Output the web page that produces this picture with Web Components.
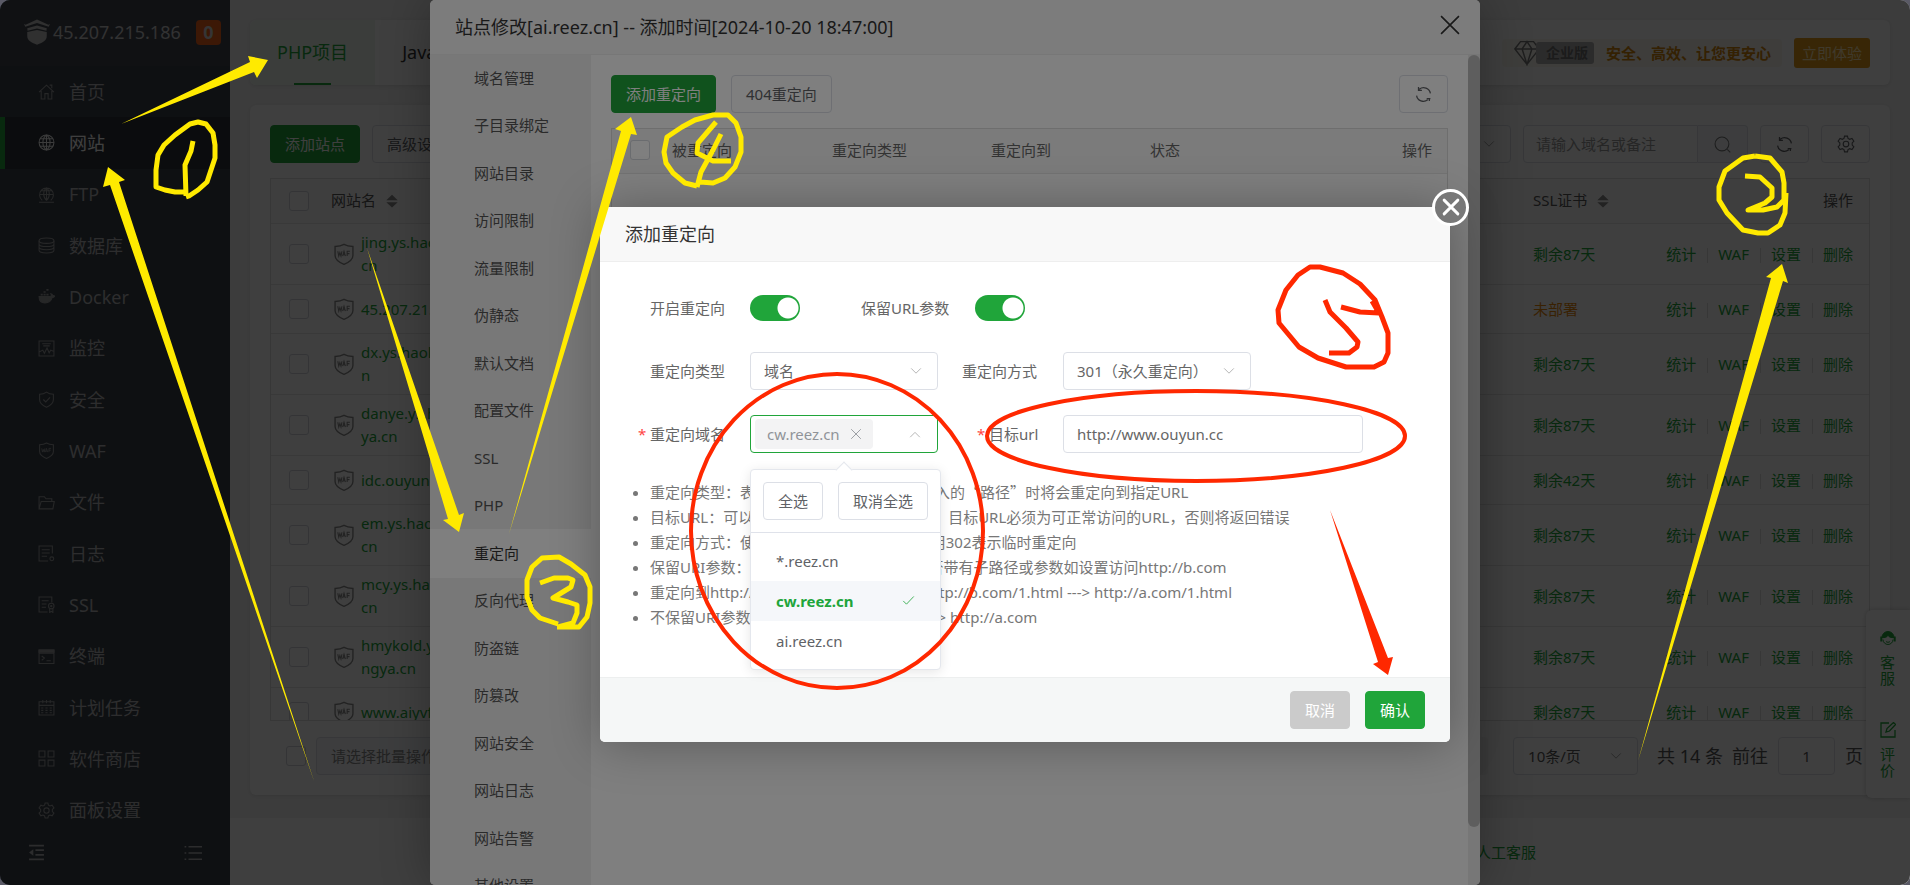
<!DOCTYPE html>
<html lang="zh-CN">
<head>
<meta charset="utf-8">
<title>网站管理</title>
<style>
html,body{height:100%}
body{margin:0;background:#5a5a66;font-family:"Noto Sans","Noto Sans CJK SC",sans-serif;font-size:15px;line-height:24px;color:#666;overflow:hidden}
</style>
</head>
<body>
<app-shell></app-shell>
<script>
const ICONS={
home:'<path d="M1 8.5 8 2l7 6.500M3 7.500V15h3.500v-5h3v5H13V7.500M11 2h2v3"/>',
globe:'<circle cx="8" cy="8" r="7"/><path d="M1 8h14M8 1v14M2 4.500h12M2 11.500h12M8 1C3.500 4 3.500 12 8 15M8 1c4.500 3 4.500 11 0 14"/>',
ftp:'<path d="M4 13.500a6.500 6.500 0 1 1 8 0M1.500 8h13M8 1.500v12M8 1.500c-3.500 3-3.500 9 0 12M8 1.500c3.500 3 3.500 9 0 12M3 4.500h10M1 15.300h14"/>',
db:'<ellipse cx="8" cy="3.500" rx="7" ry="2.500"/><path d="M1 3.500v9c0 1.400 3.100 2.500 7 2.500s7-1.100 7-2.500v-9M1 6.500C1 7.900 4.100 9 8 9s7-1.100 7-2.500M1 9.500C1 10.900 4.100 12 8 12s7-1.100 7-2.500"/>',
docker:'<path d="M1 8h10.500c1 0 1.300-1.600.6-2.600 1.200.1 1.700 1 1.700 1.800.8-.2 1.600 0 2 .5-.6 1-1.500 1.300-2.500 1.300C12.300 12.500 9.500 14 6.500 14 3 14 1 12 1 8z" fill="currentColor"/><path d="M2.500 5.500h2v1.500h-2zM5.200 5.500h2v1.500h-2zM7.900 5.500h2v1.500h-2zM5.200 3h2v1.500h-2zM7.900 1h2v1.500h-2z" fill="currentColor" stroke="none"/>',
monitor:'<path d="M1 1h14v14H1zM4 3.500h8M5 5.500h6M1.500 11l3-1.500 1.500 3 2.500-5 2 4.500 1.500-2.500 2.500 1"/>',
shield:'<path d="M8 1c2 1.500 4 2 6.500 2v5c0 3.500-3 5.700-6.500 7.300C4.500 13.700 1.500 11.500 1.500 8V3C4 3 6 2.500 8 1z"/><path d="m5 8 2.300 2.300L11.300 6"/>',
waf:'<path d="M8 1c2 1.200 4 1.500 6.500 1.500V9c0 3-3 5-6.500 6.500C4.500 14 1.500 12 1.500 9V2.500C4 2.500 6 2.200 8 1z"/><path d="m3.500 6 .7 3.500L5 7l.8 2.500L6.500 6M7 9.500 8 6l1 3.500M7.300 8.500h1.400M10.300 9.500V6h2M10.300 7.700h1.700" stroke-width=".8"/>',
folder:'<path d="M1 14V2.500h5L7.500 4.500H13V7M1 14 3 7h12.300L14 14z"/>',
log:'<path d="M13.500 8V1H1v14h8.500M3.500 4.500H11M3.500 7.500H11M3.500 10.500h5"/><circle cx="13" cy="13" r="1.800"/>',
ssl:'<path d="M13 6V1H1v14h8M3.500 4.500H10M3.500 7.500H8M3.500 10.500h4"/><circle cx="12.500" cy="9.500" r="2.600"/><circle cx="12.500" cy="9.500" r=".6"/><path d="M11 12v3.500l1.500-1 1.500 1V12"/>',
term:'<path d="M1 2h14v12.500H1zM1 5h14M3.500 7.500 6 9.500l-2.500 2M8 12h4"/><path d="M1 2h14v2H1z" fill="currentColor"/>',
cal:'<path d="M1 2.500h14V15H1zM1 6h14M4.500 1v3M8 1v3M11.500 1v3M3 8.500h2M7 8.500h2M11 8.500h2M3 10.700h2M7 10.700h2M11 10.700h2M3 13h2M7 13h2M11 13h2"/>',
grid:'<path d="M1 1h5.500v5.500H1zM9.500 1H15v5.500H9.500zM1 9.500h5.500V15H1zM9.500 9.500H15V15H9.500z"/>',
gear:'<path d="m6.700 1-.5 2-1.500.8-2-.8L1 5.500 2.500 7v2L1 10.500 2.700 13l2-.8 1.500.8.5 2h2.600l.5-2 1.500-.8 2 .8L15 10.500 13.500 9V7L15 5.500 13.300 3l-2 .8L9.800 3l-.5-2z"/><circle cx="8" cy="8" r="2.500"/>',
fold:'<path d="M1 1.500h14M7 5.800h8M7 10.200h8M1 14.500h14" stroke-width="1.500"/><path d="M5 5v6L1 8z" fill="currentColor" stroke="none"/>',
list:'<path d="M4 2.500h12M4 8h12M4 13.500h12M.5 2.500H2M.5 8H2M.5 13.500H2" stroke-width="1.300"/>',
refresh:'<path d="M1.500 9A6.500 6.500 0 0 0 12 13M14.500 7A6.500 6.500 0 0 0 4 3M3.300 1v3.200h3.200M14.500 11.800H11M13.500 11.800V14" stroke-width="1.200"/>',
search:'<circle cx="7.500" cy="7.500" r="6.500"/><path d="m12.500 12.500 2.800 2.800"/>',
down:'<path d="m2.500 5 5.500 5.500L13.500 5"/>',
up:'<path d="m2.500 10.500 5.500-5.500 5.500 5.500"/>',
x:'<path d="m2.500 2.500 11 11M13.500 2.500l-11 11"/>',
xbold:'<path d="m2.500 2.500 11 11M13.500 2.500l-11 11" stroke-width="2.300" stroke-linecap="round"/>',
check:'<path d="m1.500 8.500 4 4 9-9.500"/>',
sort:'<path d="M8 .8 14.500 7h-13zM1.500 9.500h13L8 15.500z" fill="currentColor" stroke="none"/>',
diamond:'<path d="M4 1h8l3.500 4.500L8 15 .5 5.500zM.5 5.500h15M5 5.500 8 15l3-9.500M5 5.500 8 1l3 4.500" stroke-width=".9"/>',
head:'<path d="M2 7.500a6 6 0 0 1 12 0c-3 .5-5-.5-6-2-1 1.500-3 2.500-6 2z" fill="currentColor"/><path d="M3 9.500a5 5 0 0 0 10 0M6 11.500c1 1 3 1 4 0"/><path d="M.3 6.500h2v5h-2zM13.700 6.500h2v5h-2z" fill="currentColor" stroke="none"/>',
edit:'<path d="M9 1H1v14h14V8M6 10l1-3.500L13.500.5l2 2L9.500 9z" stroke-width="1.300"/>',
logo:'<path d="M8 .3 1 3.500 0 3l.8 1.700L8 2.500l7.200 2.200L16 3l-1 .5zM2 5.700 8 4l6 1.700-.2 1.500L8 5.800 2.200 7.200z" fill="currentColor" stroke="none"/><path d="M2 8 8 6.700 14 8v2.500c0 2.500-2 4-6 5.300-4-1.300-6-2.800-6-5.300z" fill="currentColor" stroke="none"/>'
};
const define=(name,css,html)=>customElements.define(name,class extends HTMLElement{
  constructor(){super();this.attachShadow({mode:'open'}).innerHTML='<style>*{box-sizing:border-box}'+css+'</style>'+html}
});

customElements.define('ui-icon',class extends HTMLElement{
  connectedCallback(){
    const s=this.getAttribute('size')||16;
    if(!this.shadowRoot)this.attachShadow({mode:'open'}).innerHTML=`<style>:host{display:inline-flex;flex:none}svg{display:block}</style><svg width="${s}" height="${s}" viewBox="0 0 16 16" fill="none" stroke="currentColor" stroke-width="1" aria-hidden="true">${ICONS[this.getAttribute('name')]}</svg>`;
  }
});

define('ui-button',`
:host{display:inline-flex;flex:none}
button{font:inherit;height:38px;padding:0 14px;border:1px solid #dcdfe6;border-radius:4px;background:#fff;color:#606266;display:flex;align-items:center;justify-content:center;white-space:nowrap;cursor:pointer}
:host([kind=primary]) button{background:#20a53a;border-color:#20a53a;color:#fff}
:host([kind=muted]) button{background:#cbcbcb;border-color:#cbcbcb;color:#fff}
:host([kind=icon]) button{width:49px;padding:0}
`,`<button type="button"><slot></slot></button>`);

define('app-sidebar',`
:host{display:flex;flex-direction:column;flex:none;width:230px;background:#3a4149;color:#c8c8c8}
header{height:66px;display:flex;align-items:center;padding:0 9px 2px 24px;font-size:18px;background:#40474f}
header ui-icon{color:#c0c0c0;margin-right:3px}
header span{flex:1}
b{width:25px;height:25px;border-radius:4px;background:#f0601a;color:#d4d4d4;text-align:center;line-height:25px}
nav{flex:1;display:grid;grid-auto-rows:1fr}
a{display:flex;align-items:center;padding-left:38px;gap:14px;font-size:18px;color:#b4b6b8;text-decoration:none}
a ui-icon{color:#9a9c9e}
a.on{background:#2c3138;border-left:5px solid #20a53a;padding-left:33px;color:#fff}
a.on ui-icon{color:#f0f0f0}
footer{height:49px;padding:8px 28px;display:flex;justify-content:space-between;align-items:flex-start;color:#b0b2b4}
`,`<header><ui-icon name="logo" size="26"></ui-icon><span>45.207.215.186</span><b>0</b></header><nav>`+
[['home','首页'],['globe','网站'],['ftp','FTP'],['db','数据库'],['docker','Docker'],['monitor','监控'],['shield','安全'],['waf','WAF'],['folder','文件'],['log','日志'],['ssl','SSL'],['term','终端'],['cal','计划任务'],['grid','软件商店'],['gear','面板设置']]
.map(([i,t],n)=>`<a href="#${i}"${n==1?' class="on"':''}><ui-icon name="${i}" size="17"></ui-icon>${t}</a>`).join('')+
`</nav><footer><ui-icon name="fold" size="17"></ui-icon><ui-icon name="list" size="18"></ui-icon></footer>`);

define('top-tabs',`
:host{display:flex;height:65px;background:#fdfdfd;border-radius:6px;overflow:hidden;flex:none;box-shadow:0 1px 4px rgba(0,0,0,.1)}
a{position:relative;display:flex;align-items:center;padding:0 27px 2px;font-size:18px;color:#333;text-decoration:none}
a.on{background:#edf6ee;color:#20a53a}
a.on::after{content:"";position:absolute;left:44px;right:44px;bottom:0;height:2px;background:#20a53a}
.promo{margin-left:auto;margin-right:20px;display:flex;align-items:center;gap:12px}
.pill{display:flex;align-items:center;height:28px;padding:0 11px 0 12px;border-radius:4px;background:#f9f6ef;color:#d3850a;font-weight:700}
.pill ui-icon{color:#777}
.tag{background:#acacac;color:#6c6c6c;border-radius:3px;padding:0 6px 0 10px;line-height:22px;font-size:14px;margin:0 12px 0 -4px}
button{font:inherit;height:30px;border:0;border-radius:3px;background:#e09a18;color:#ffe6b0;padding:0 8px;white-space:nowrap}
`,`<a class="on" href="#php">PHP项目</a><a href="#java">Java项目</a>
<div class="promo"><div class="pill"><ui-icon name="diamond" size="26"></ui-icon><span class="tag">企业版</span>安全、高效、让您更安心</div><button type="button">立即体验</button></div>`);

const SITES=[['jing.ys.haolengya.','cn','87'],['45.207.215.186','',''],['dx.ys.haolengya.c','n','87'],['danye.ys.haoleng','ya.cn','87'],['idc.ouyun.cc','','42'],['em.ys.haolengya.','cn','87'],['mcy.ys.haolengya.','cn','87'],['hmykold.ys.haole','ngya.cn','87'],['www.aiyvf.cn','','87']];
define('site-table',`
:host{display:block;flex:1;min-height:0;overflow:hidden;border:1px solid #dcdcdc;background:#fff}
table{width:100%;table-layout:fixed;border-collapse:separate;border-spacing:0}
th{height:45px;padding:0 12px 2px;background:#fafafa;border-bottom:1px solid #e6e6e6;font-weight:400;text-align:left;color:#555}
td{height:49px;padding:0 12px;border-bottom:1px solid #e6e6e6;line-height:23px;color:#20a53a}
tr.two td{height:61px}
th:first-child,td:first-child{padding:0 0 0 18px}
th:last-child,td:last-child{text-align:right;padding-right:16px}
input{appearance:none;display:block;width:20px;height:20px;margin:0;border:1px solid #d0d3da;border-radius:3px;background:#fff}
.site{display:flex;align-items:center;gap:6px;margin-left:2px;white-space:nowrap}
.site ui-icon{color:#8a8a8a}
a{color:inherit;text-decoration:none}
i{display:inline-block;width:1px;height:15px;background:#dcdcdc;margin:0 10px 0 11px;vertical-align:-3px}
.none{color:#e6860a}
th ui-icon{color:#888;margin-left:9px;vertical-align:-2px}
`,`<table><colgroup><col style="width:48px"><col style="width:200px"><col><col style="width:128px"><col style="width:220px"></colgroup>
<thead><tr><th><input type="checkbox" aria-label="全选"></th><th>网站名<ui-icon name="sort" size="14"></ui-icon></th><th></th><th>SSL证书<ui-icon name="sort" size="14"></ui-icon></th><th>操作</th></tr></thead><tbody>`+
SITES.map(([a,b,d])=>`<tr class="${b?'two':''}"><td><input type="checkbox" aria-label="选择站点"></td><td><div class="site"><ui-icon name="waf" size="22"></ui-icon><a href="#site">${a}${b?'<br>'+b:''}</a></div></td><td></td><td>${d?`<a href="#ssl">剩余${d}天</a>`:'<a class="none" href="#ssl">未部署</a>'}</td><td><a href="#s">统计</a><i></i><a href="#w">WAF</a><i></i><a href="#c">设置</a><i></i><a href="#d">删除</a></td></tr>`).join('')+`</tbody></table>`);

define('site-card',`
:host{display:flex;flex-direction:column;flex:1;min-height:0;background:#fdfdfd;border-radius:6px;padding:20px;box-shadow:0 1px 4px rgba(0,0,0,.1)}
.bar{display:flex;gap:12px;margin-bottom:15px;flex:none}
.bar .gap{flex:1}
input[type=text],select{font:inherit;height:38px;border:1px solid #dcdfe6;border-radius:4px;background:#fff;padding:0 14px;color:#555;appearance:none;min-width:0}
input::placeholder{color:#999;opacity:1}
.sel{position:relative;display:flex}
.sel select{width:125px}
.sel ui-icon{position:absolute;right:15px;top:12px;color:#999}
.find{display:flex}
.find input{width:175px;padding:0 12px;border-radius:4px 0 0 4px}
.find button{width:50px;border:1px solid #dcdfe6;border-left:0;border-radius:0 4px 4px 0;background:#f5f7fa;color:#777;padding:4px 0 0}
.pager{display:flex;align-items:center;margin-top:16px;flex:none;font-size:18px;color:#555}
.pager input[type=checkbox]{appearance:none;width:20px;height:20px;margin:0 10px 0 16px;border:1px solid #d0d3da;border-radius:3px}
.pager select,.pager input[type=text]{font-size:15px}
.pager .batch{width:200px;background:#f5f7fa;color:#888}
.pager .do{margin-left:auto;margin-right:25px;width:70px;height:38px;border:0;border-radius:4px;background:#f2f2f2;font:inherit;font-size:15px;color:#ccc}
.total{margin:0 9px 0 19px}
.pager .go{width:57px;text-align:center;margin:0 10px}
.end{margin-right:7px}
`,`<div class="bar"><ui-button kind="primary">添加站点</ui-button><ui-button>高级设置</ui-button><span class="gap"></span>
<span class="sel"><select aria-label="分类"><option>全部分类</option></select><ui-icon name="down" size="14"></ui-icon></span>
<span class="find"><input type="text" placeholder="请输入域名或备注" aria-label="搜索"><button type="button" aria-label="搜索"><ui-icon name="search" size="17"></ui-icon></button></span>
<ui-button kind="icon"><ui-icon name="refresh" size="17"></ui-icon></ui-button><ui-button kind="icon"><ui-icon name="gear" size="18"></ui-icon></ui-button></div>
<site-table></site-table>
<div class="pager"><input type="checkbox" aria-label="全选"><select class="batch" aria-label="批量操作"><option>请选择批量操作</option></select><button class="do" type="button">执行</button>
<span class="sel"><select aria-label="每页"><option>10条/页</option></select><ui-icon name="down" size="14"></ui-icon></span><span class="total">共 14 条</span><label for="go">前往</label><input class="go" id="go" type="text" value="1"><span class="end">页</span></div>`);

define('side-float',`
:host{position:absolute;right:0;top:610px;width:44px;height:188px;background:#fff;border-radius:6px 0 0 6px;box-shadow:0 0 5px rgba(0,0,0,.2);display:flex;flex-direction:column;align-items:center;justify-content:space-between;padding:20px 0;color:#20a53a}
a{width:16px;color:inherit;text-decoration:none;line-height:16px;display:flex;flex-direction:column;gap:8px}
`,`<a href="#kf"><ui-icon name="head" size="16"></ui-icon>客服</a><a href="#pj"><ui-icon name="edit" size="16"></ui-icon>评价</a>`);

define('site-page',`
:host{flex:1;min-width:0;display:flex;flex-direction:column;background:#f2f2f2}
main{flex:1;min-height:0;display:flex;flex-direction:column;gap:20px;padding:20px 20px 23px}
footer{height:67px;flex:none;background:#fcfcfc;display:flex;justify-content:center;align-items:center;padding-left:872px}
footer a{color:#20a53a;text-decoration:none}
`,`<main><top-tabs></top-tabs><site-card></site-card></main><footer><a href="#help">人工客服</a></footer><side-float></side-float>`);

define('site-drawer',`
:host{display:flex;flex-direction:column;width:1050px;max-width:100%;height:100%;background:#fff;border-radius:5px;overflow:hidden;box-shadow:1px 1px 50px rgba(0,0,0,.3)}
header{height:55px;flex:none;display:flex;align-items:center;justify-content:space-between;padding:0 17px 0 25px;background:#f8f8f8;border-bottom:1px solid #eee;font-size:18px;color:#333}
header button{border:0;background:none;padding:0;color:#333;display:flex;margin-top:-5px}
.body{flex:1;min-height:0;display:flex}
nav{width:161px;flex:none;background:#f0f0f0;display:grid;grid-auto-rows:47px 48px;align-content:start;overflow:hidden}
nav a{padding:0 0 2px 44px;display:flex;align-items:center;color:#555;text-decoration:none}
nav a.on{background:#fff;margin:-1px 0;color:#333}
section{flex:1;padding:20px}
.bar{display:flex;gap:15px;margin-bottom:15px}
.bar ui-button:last-child{margin-left:auto}
table{width:100%;height:320px;border:1px solid #ddd;border-collapse:separate;border-spacing:0;table-layout:fixed}
th{height:45px;background:#f6f6f6;border-bottom:1px solid #e6e6e6;padding:0 0 2px;text-align:left;font-weight:400;color:#666}
th:first-child{padding-left:18px}
th:last-child{text-align:right;padding-right:15px}
input{appearance:none;display:block;width:20px;height:20px;margin:0;border:1px solid #d5d8df;border-radius:3px;background:#fff}
.track{width:12px;background:#eee}
.thumb{height:93%;background:#bdbdbd;border-radius:6px}
`,`<header><span>站点修改[ai.reez.cn] -- 添加时间[2024-10-20 18:47:00]</span><button type="button" aria-label="关闭"><ui-icon name="x" size="26"></ui-icon></button></header>
<div class="body"><nav>`+'域名管理,子目录绑定,网站目录,访问限制,流量限制,伪静态,默认文档,配置文件,SSL,PHP,重定向,反向代理,防盗链,防篡改,网站安全,网站日志,网站告警,其他设置'.split(',').map(t=>`<a href="#m"${t=='重定向'?' class="on"':''}>${t}</a>`).join('')+`</nav>
<section><div class="bar"><ui-button kind="primary">添加重定向</ui-button><ui-button>404重定向</ui-button><ui-button kind="icon"><ui-icon name="refresh" size="17"></ui-icon></ui-button></div>
<table><colgroup><col style="width:60px"><col style="width:160px"><col style="width:159px"><col style="width:159px"><col></colgroup><thead><tr><th><input type="checkbox" aria-label="全选"></th><th>被重定向</th><th>重定向类型</th><th>重定向到</th><th>状态</th><th>操作</th></tr></thead><tbody><tr><td colspan="6"></td></tr></tbody></table></section>
<div class="track"><div class="thumb"></div></div></div>`);

define('redirect-dialog',`
:host{display:flex;flex-direction:column;position:relative;width:850px;color:#666;background:#fff;border-radius:5px;box-shadow:1px 1px 50px rgba(0,0,0,.3)}
header{height:55px;padding:0 25px;display:flex;align-items:center;background:#f8f8f8;border-bottom:1px solid #eee;border-radius:5px 5px 0 0;font-size:18px;color:#333}
.close{position:absolute;right:-19px;top:-18px;width:37px;height:37px;border:3px solid #fff;border-radius:50%;background:#787878;color:#fff;padding:0;display:grid;place-items:center}
form{padding:33px 50px 47px}
.row{display:flex;align-items:center;height:38px;margin-bottom:25px}
.row.first{height:26px;margin-bottom:31px}
.row.last{margin-bottom:26px}
.row>label{width:100px;position:relative}
.req::before{content:"*";position:absolute;left:-12px;color:#f44}
.row>label.b{width:101px;margin-left:24px}
.row.first>label.b{width:114px;margin-left:61px}
.r{display:block;padding-left:27px}
.r::before{content:"*";position:absolute;left:15px;color:#f44}
.sw{appearance:none;width:50px;height:26px;margin:0;border-radius:13px;background:radial-gradient(circle at 38px 13px,#fff 10px,#20a53a 11px)}
.sel{position:relative;display:flex;width:188px}
select,input[type=url]{font:inherit;width:100%;height:38px;border:1px solid #dcdfe6;border-radius:4px;background:#fff;padding:0 13px;color:#666;appearance:none}
.url{width:300px}
.sel>ui-icon{position:absolute;right:15px;top:12px;color:#aaa}
.multi{height:38px;border:1px solid #20a53a;border-radius:4px;align-items:center;padding-left:4px}
.tag{height:30px;display:flex;align-items:center;gap:9px;padding:0 10px 0 12px;border-radius:4px;background:#f3f3f4;color:#909399}
.tag button{border:0;background:none;padding:0;display:flex;color:#909399}
.pop{position:absolute;left:-1px;top:53px;width:191px;height:201px;background:#fff;border:1px solid #e4e7ed;border-radius:4px;box-shadow:0 2px 12px rgba(0,0,0,.1)}
.pop::before{content:"";position:absolute;left:87px;top:-6px;width:11px;height:11px;background:#fff;border:1px solid #e4e7ed;border-right:0;border-bottom:0;transform:rotate(45deg)}
.act{display:flex;gap:15px;padding:12px;border-bottom:1px solid #dfe2ea}
.pop ul{list-style:none;margin:0;padding:8px 0}
.pop li{height:40px;display:flex;align-items:center;justify-content:space-between;padding:0 25px;color:#606266}
.pop li.on{background:#f5f7fa;color:#20a53a;font-weight:700}
.help{margin:0;padding:0;line-height:25px;color:#777;white-space:nowrap}
.help q{quotes:none;font-family:"Noto Sans CJK SC",sans-serif}
footer{height:65px;display:flex;align-items:center;justify-content:flex-end;gap:15px;padding:0 25px;background:#f5f7f7;border-top:1px solid #edefef;border-radius:0 0 5px 5px}
`,`<header>添加重定向</header><button class="close" type="button" aria-label="关闭"><ui-icon name="xbold" size="20"></ui-icon></button>
<form><div class="row first"><label for="on">开启重定向</label><input class="sw" id="on" type="checkbox" checked><label class="b" for="keep">保留URL参数</label><input class="sw" id="keep" type="checkbox" checked></div>
<div class="row"><label for="type">重定向类型</label><span class="sel"><select id="type"><option>域名</option></select><ui-icon name="down" size="14"></ui-icon></span><label class="b" for="mode">重定向方式</label><span class="sel"><select id="mode"><option>301（永久重定向）</option></select><ui-icon name="down" size="14"></ui-icon></span></div>
<div class="row last"><label class="req" id="dl">重定向域名</label><div class="sel multi" role="combobox" aria-labelledby="dl" aria-expanded="true"><span class="tag">cw.reez.cn<button type="button" aria-label="移除"><ui-icon name="x" size="14"></ui-icon></button></span><ui-icon name="up" size="14"></ui-icon>
<div class="pop"><div class="act"><ui-button>全选</ui-button><ui-button>取消全选</ui-button></div><ul role="listbox"><li role="option">*.reez.cn</li><li class="on" role="option" aria-selected="true">cw.reez.cn<ui-icon name="check" size="13"></ui-icon></li><li role="option">ai.reez.cn</li></ul></div></div>
<label class="b" for="url"><span class="r">目标url</span></label><span class="url"><input id="url" type="url" value="http://www.ouyun.cc"></span></div>
<ul class="help"><li>重定向类型：表示访问选择的<q>“</q>域名<q>”</q>或输入的<q>“</q>路径<q>”</q>时将会重定向到指定URL</li><li>目标URL：可以填写你需要重定向到的站点，目标URL必须为可正常访问的URL，否则将返回错误</li><li>重定向方式：使用301表示永久重定向，使用302表示临时重定向</li><li>保留URI参数：表示重定向后访问的URL是否带有子路径或参数如设置访问http://b.com</li><li>重定向到http://a.com 保留URI 参数为： http://b.com/1.html ---&gt; http://a.com/1.html</li><li>不保留URI参数为：http://b.com/1.html ---&gt; http://a.com</li></ul></form>
<footer><ui-button kind="muted">取消</ui-button><ui-button kind="primary">确认</ui-button></footer>`);

define('hand-notes',`
:host{position:absolute;inset:0;pointer-events:none;overflow:hidden}
svg{display:block}
.y{stroke:#ffea00}.r{stroke:#ff2800}.fy{fill:#ffea00;stroke:none}.fr{fill:#ff2800;stroke:none}
`,`<svg width="1910" height="885" fill="none" stroke-width="5" stroke-linejoin="round" aria-hidden="true">
<g class="y">
<path d="M185 192H175L165 190 156 187V170L158 155 164 145 175 135 190 124 198 122 206 124 213 133 215 145V158L211 170 207 182 198 190 189 196 186 197M193 141 191 151 188 158 185 165 186 196"/>
<path d="M697 186 685 183 673 173 666 163 664 152 667 137 682 127 695 120 713 115H728L736 123 741 137V152L735 167 725 178 713 183 700 182M716 122 698 143 697 153 713 161H731M721 134 713 150 701 172 697 187"/>
<path d="M558 624 540 618 532 610 527 597V580L532 567 542 558 559 557 571 564 585 575 590 587V603L587 617 579 627H557M540 583 554 578H568L573 580 571 587 553 598 568 602 577 605V613L573 623 558 627"/>
<path d="M1755 156 1743 158 1725 171 1719 187V200L1727 213 1743 230 1758 233H1768L1780 225 1785 213 1786 193M1755 156 1770 158 1782 172 1784 183V200L1777 207 1763 210H1748L1765 203 1772 197V188L1760 177 1745 176"/>
</g>
<g class="r">
<path d="M1310 267H1320L1343 273 1360 284 1375 300 1382 317 1388 333V353L1384 362 1374 367H1346L1318 358 1299 347 1279 323 1278 310 1286 290 1298 275ZM1325 300 1330 312 1346 328 1358 342 1357 347 1349 353H1329M1341 307 1360 312 1379 313 1372 301"/>
<ellipse cx="837" cy="531" rx="146" ry="157" stroke-width="4"/><ellipse cx="1196" cy="436" rx="209" ry="45" stroke-width="4"/>
</g>
<path class="fy" d="M121 124 250 62 248 56 268 60 257 78 254 72ZM314 781 110 185 103 187 108 167 125 180 119 182ZM367 248 448 519 443 520 459 532 464 513 459 515ZM509 534 621 131 615 129 631 117 637 135 631 134ZM1638 761 1771 278 1766 277 1782 264 1788 283 1783 281Z"/>
<path class="fr" d="M1330 510 1378 662 1373 664 1388 675 1393 657 1388 658Z"/>
</svg>`);

define('app-shell',`
:host{position:relative;display:flex;height:100%;min-height:600px;border-radius:10px;overflow:hidden}
.layer{position:absolute;inset:0;display:flex;justify-content:center;background:rgba(0,0,0,.5)}
.dialog{align-items:center;padding:63px 0 0 140px}
`,`<app-sidebar></app-sidebar><site-page></site-page><div class="layer"><site-drawer></site-drawer></div><div class="layer dialog"><redirect-dialog></redirect-dialog></div><hand-notes></hand-notes>`);
</script>
</body>
</html>
